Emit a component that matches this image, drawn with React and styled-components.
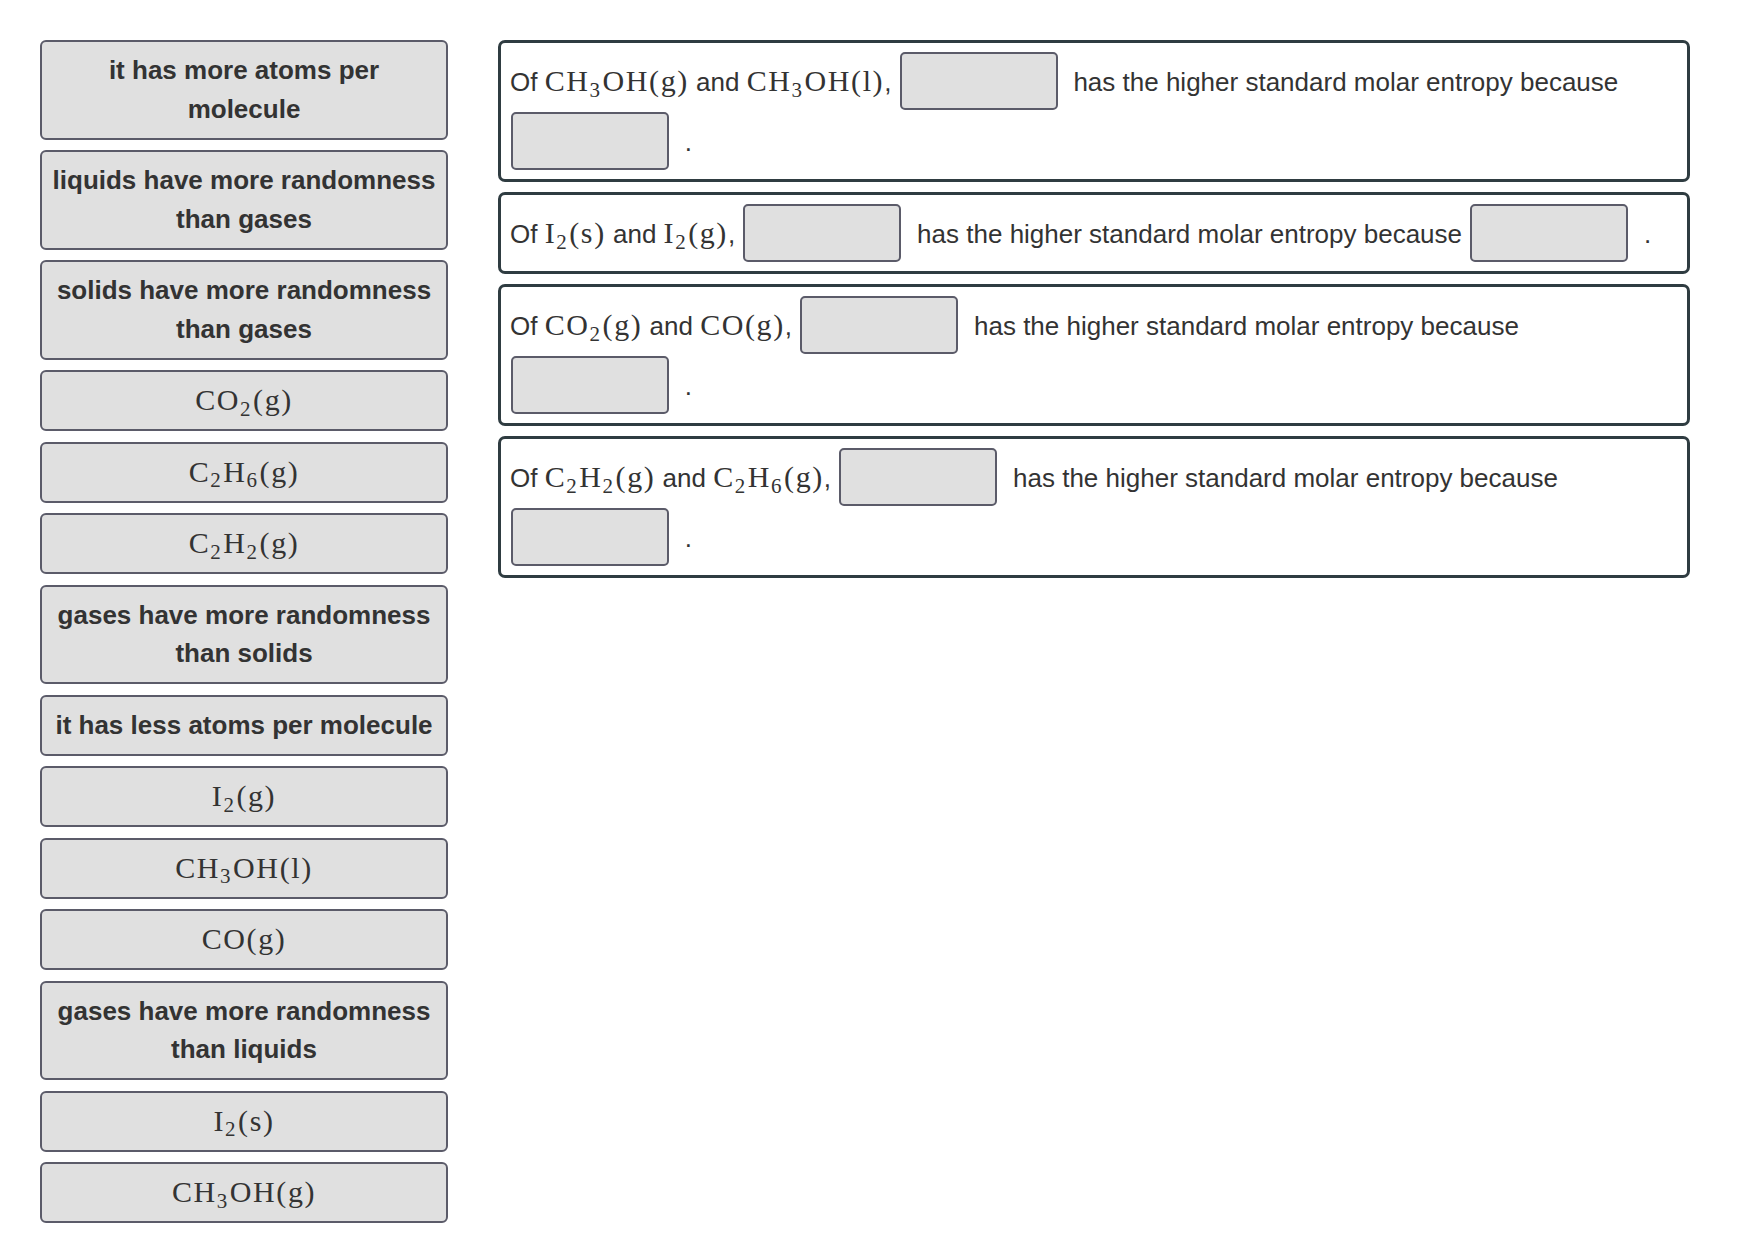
import React from "react";
import styled, { createGlobalStyle, css } from "styled-components";

const GlobalStyle = createGlobalStyle`
  html, body { margin: 0; padding: 0; background: #ffffff; }
  * { box-sizing: border-box; }
`;

const Page = styled.div`
  display: flex;
  align-items: flex-start;
  gap: 50px;
  padding: 40px 0 0 40px;
`;

const Bank = styled.div`
  display: flex;
  flex-direction: column;
  gap: 10.5px;
  width: 408px;
  flex: none;
`;

const Tile = styled.div`
  height: ${(p) => (p.$lines === 2 ? "99.5px" : "61px")};
  overflow: hidden;
  border: 2px solid #5b5b69;
  border-radius: 6px;
  background: #e0e0e0;
  padding: 9px 9px;
  text-align: center;
  color: #333;
  font-family: "Liberation Sans", Arial, sans-serif;
  font-weight: 700;
  font-size: 26px;
  line-height: 38.5px;
  ${(p) =>
    p.$math &&
    css`
      font-family: "Liberation Serif", "Times New Roman", serif;
      font-weight: 400;
      font-size: 30px;
      line-height: 40px;
      padding: 8px 9px;
    `}
`;

const Questions = styled.div`
  display: flex;
  flex-direction: column;
  gap: 10px;
  width: 1192px;
  flex: none;
`;

const Question = styled.div`
  border: 3px solid #2f3c41;
  border-radius: 7px;
  padding: 8px 9px;
  color: #333;
  font-family: "Liberation Sans", Arial, sans-serif;
  font-size: 26px;
  line-height: 1.2;
`;

const Drop = styled.span`
  display: inline-block;
  vertical-align: -20px;
  width: 158px;
  height: 58px;
  margin: 1px 8.5px 1px 1px;
  border: 2px solid #5b5b69;
  border-radius: 5px;
  background: #e0e0e0;
`;

const Chem = styled.span`
  font-family: "Liberation Serif", "Times New Roman", serif;
  font-weight: 400;
  font-size: 30px;
  letter-spacing: 1.6px;
  color: #333;
  line-height: 1;
`;

const Sub = styled.span`
  font-size: 70%;
  position: relative;
  top: 0.28em;
  letter-spacing: 0;
  margin-right: 2.5px;
`;

function Formula({ text }) {
  const parts = text.split(/(\d+)/).filter(Boolean);
  return (
    <Chem>
      {parts.map((p, i) => (/^\d+$/.test(p) ? <Sub key={i}>{p}</Sub> : <React.Fragment key={i}>{p}</React.Fragment>))}
    </Chem>
  );
}

const tiles = [
  { t: "it has more atoms per molecule", n: 2 },
  { t: "liquids have more randomness than gases", n: 2 },
  { t: "solids have more randomness than gases", n: 2 },
  { f: "CO2(g)" },
  { f: "C2H6(g)" },
  { f: "C2H2(g)" },
  { t: "gases have more randomness than solids", n: 2 },
  { t: "it has less atoms per molecule", n: 1 },
  { f: "I2(g)" },
  { f: "CH3OH(l)" },
  { f: "CO(g)" },
  { t: "gases have more randomness than liquids", n: 2 },
  { f: "I2(s)" },
  { f: "CH3OH(g)" },
];

const questions = [
  ["CH3OH(g)", "CH3OH(l)"],
  ["I2(s)", "I2(g)"],
  ["CO2(g)", "CO(g)"],
  ["C2H2(g)", "C2H6(g)"],
];

export default function App() {
  return (
    <>
      <GlobalStyle />
      <Page>
        <Bank>
          {tiles.map((it, i) => (
            <Tile key={i} $math={!!it.f} $lines={it.n || 1}>
              {it.f ? <Formula text={it.f} /> : it.t}
            </Tile>
          ))}
        </Bank>
        <Questions>
          {questions.map(([a, b], i) => (
            <Question key={i}>
              Of <Formula text={a} /> and <Formula text={b} />, <Drop /> has the higher standard molar entropy because <Drop /> .
            </Question>
          ))}
        </Questions>
      </Page>
    </>
  );
}
